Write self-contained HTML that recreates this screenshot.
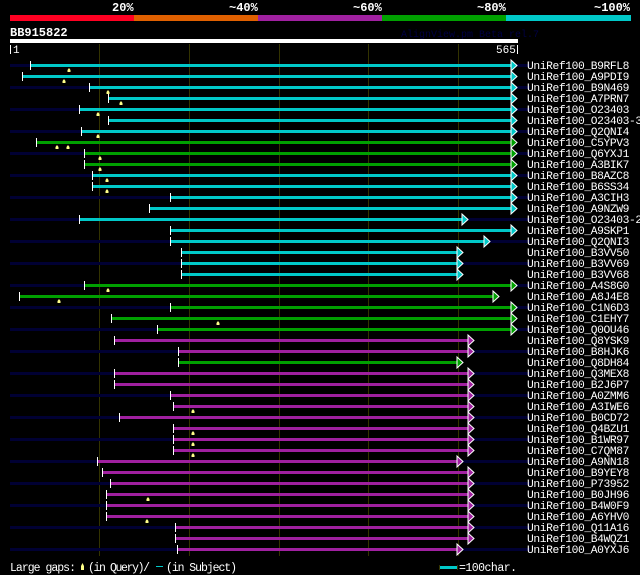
<!DOCTYPE html>
<html><head><meta charset="utf-8">
<style>
html,body{margin:0;padding:0;background:#000;width:640px;height:575px;overflow:hidden}
svg{display:block}
text{font-family:"Liberation Mono",monospace;fill:#fff}
</style></head><body>
<svg id="s" width="640" height="575" xmlns="http://www.w3.org/2000/svg">
<rect x="10" y="15" width="124" height="6" fill="#ff0022"/>
<rect x="134" y="15" width="124" height="6" fill="#e06000"/>
<rect x="258" y="15" width="124" height="6" fill="#a020a0"/>
<rect x="382" y="15" width="124" height="6" fill="#00a000"/>
<rect x="506" y="15" width="125" height="6" fill="#00c8c8"/>
<g font-size="12" font-weight="bold">
<text x="112" y="11">20%</text>
<text x="229" y="11">~40%</text>
<text x="353" y="11">~60%</text>
<text x="477" y="11">~80%</text>
<text x="594" y="11">~100%</text>
<text x="10" y="36">BB915822</text>
</g>
<text x="401" y="37" font-size="10" style="fill:#000044">AlignView.pm Beta rel.7</text>
<rect x="10" y="39" width="508" height="4" fill="#fff"/>
<rect x="10" y="45" width="1" height="9" fill="#fff"/>
<text x="13" y="53" font-size="11">1</text>
<rect x="517" y="45" width="1" height="9" fill="#fff"/>
<text x="496" y="53" font-size="11">565</text>
<g id="grid" fill="#333300">
<rect x="99" y="44" width="1" height="512"/>
<rect x="189" y="44" width="1" height="512"/>
<rect x="279" y="44" width="1" height="512"/>
<rect x="368" y="44" width="1" height="512"/>
<rect x="458" y="44" width="1" height="512"/>
</g>
<g id="rows"></g>
<text x="10" y="571" font-size="11.5" textLength="66">Large gaps:</text>
<path d="M81 570 L81 566 L82.5 563 L84 566 L84 570Z" fill="#ffff88"/>
<text x="88" y="571" font-size="11.5" textLength="62">(in Query)/</text>
<rect x="156" y="566" width="7" height="1" fill="#00c8c8"/>
<text x="166" y="571" font-size="11.5" textLength="71">(in Subject)</text>
<rect x="439" y="565" width="1" height="5" fill="#333300"/>
<rect x="440" y="566" width="17" height="3" fill="#00c8c8"/>
<rect x="457" y="565" width="1" height="5" fill="#333300"/>
<text x="459" y="571" font-size="11.5" textLength="58">=100char.</text>
</svg>
<script>
var C={c:"#00c8c8",g:"#00a000",m:"#a020a0"};
var R=[
["B9RFL8",30,"c",511],["A9PDI9",22,"c",511],["B9N469",89,"c",511],["A7PRN7",108,"c",511],
["O23403",79,"c",511],["O23403-3",108,"c",511],["Q2QNI4",81,"c",511],["C5YPV3",36,"g",511],
["Q6YXJ1",84,"g",511],["A3BIK7",84,"g",511],["B8AZC8",92,"c",511],["B6SS34",92,"c",511],
["A3CIH3",170,"c",511],["A9NZW9",149,"c",511],["O23403-2",79,"c",462],["A9SKP1",170,"c",511],
["Q2QNI3",170,"c",484],["B3VV50",181,"c",457],["B3VV69",181,"c",457],["B3VV68",181,"c",457],
["A4S8G0",84,"g",511],["A8J4E8",19,"g",493],["C1N6D3",170,"g",511],["C1EHY7",111,"g",511],
["Q0OU46",157,"g",511],["Q8YSK9",114,"m",468],["B8HJK6",178,"m",468],["Q8DH84",178,"g",457],
["Q3MEX8",114,"m",468],["B2J6P7",114,"m",468],["A0ZMM6",170,"m",468],["A3IWE6",173,"m",468],
["B0CD72",119,"m",468],["Q4BZU1",173,"m",468],["B1WR97",173,"m",468],["C7QM87",173,"m",468],
["A9NN18",97,"m",457],["B9YEY8",102,"m",468],["P73952",110,"m",468],["B0JH96",106,"m",468],
["B4W0F9",106,"m",468],["A6YHV0",106,"m",468],["Q11A16",175,"m",468],["B4WQZ1",175,"m",468],
["A0YXJ6",177,"m",457]];
var M=[[0,69],[1,64],[2,108],[3,121],[4,98],[6,98],[7,57],[7,68],[8,100],[9,100],[10,107],[11,107],[20,108],[21,59],[23,218],[31,193],[33,193],[34,193],[35,193],[39,148],[41,147]];
var h="";
R.forEach(function(r,i){
 var y=65+i*11;
 if(i%2==0) h+='<rect x="10" y="'+(y-1)+'" width="520" height="3" fill="#000033"/>';
 h+='<rect x="'+r[1]+'" y="'+(y-1)+'" width="'+(r[3]-r[1])+'" height="3" fill="'+C[r[2]]+'"/>';
 h+='<rect x="'+r[1]+'" y="'+(y-4)+'" width="1" height="9" fill="#fff"/>';
 h+='<path d="M'+r[3]+' '+(y-5)+' L'+(r[3]+6)+' '+(y+0.5)+' L'+r[3]+' '+(y+6)+'Z" fill="'+C[r[2]]+'" stroke="#fff" stroke-width="1"/>';
 h+='<text x="527" y="'+(y+4)+'" font-size="11.3" textLength="'+(6.4*(10+r[0].length))+'">UniRef100_'+r[0]+'</text>';
});
M.forEach(function(m){var y=65+m[0]*11;h+='<path d="M'+(m[1]-1.5)+' '+(y+7)+' L'+(m[1]-1.5)+' '+(y+5)+' L'+m[1]+' '+(y+3)+' L'+(m[1]+1.5)+' '+(y+5)+' L'+(m[1]+1.5)+' '+(y+7)+'Z" fill="#ffff88"/>';});
document.getElementById("rows").innerHTML=h;
</script>
</body></html>
